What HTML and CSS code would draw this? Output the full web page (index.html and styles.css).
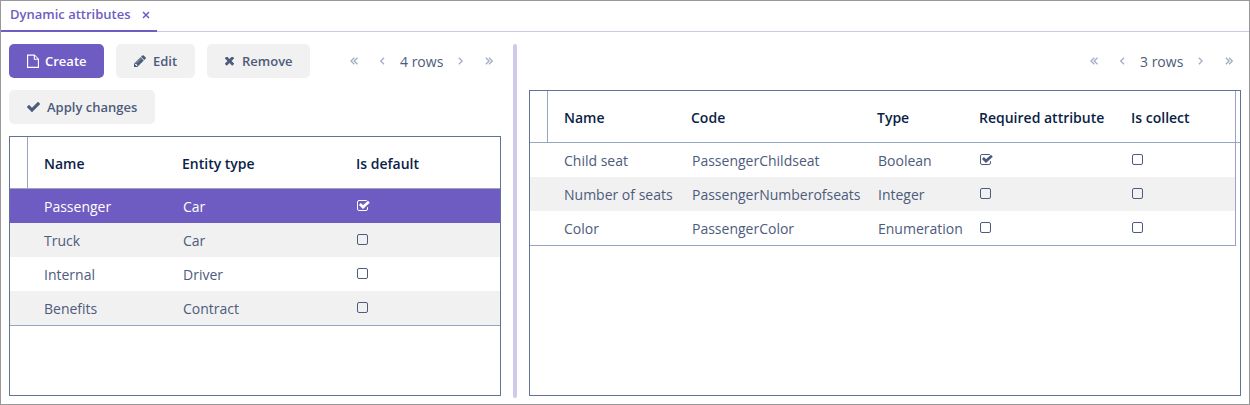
FILE: index.html
```html
<!DOCTYPE html>
<html lang="en">
<head>
<meta charset="utf-8">
<title>Dynamic attributes</title>
<link rel="stylesheet" href="styles.css">
</head>
<body>
<svg class="defs" aria-hidden="true">
  <symbol id="file" viewBox="0 0 12 14"><path fill="currentColor" d="M0 .5h7.6L12 4.900V14H0zM1.150 1.650v11.200h9.700V5.800H6.800v-4.150zM7.900 1.900v2.800h2.700z"/></symbol>
  <symbol id="pencil" viewBox="128 128 1536 1536"><path fill="currentColor" d="M491 1536l91-91-235-235-91 91v107h128v128h107zm523-928q0-22-22-22-10 0-17 7l-542 542q-7 7-7 17 0 22 22 22 10 0 17-7l542-542q7-7 7-17zm-54-192l416 416-832 832h-416v-416zm683 96q0 53-37 90l-166 166-416-416 166-165q36-38 90-38 53 0 91 38l235 234q37 39 37 91z"/></symbol>
  <symbol id="times" viewBox="302 434 1188 1188"><path fill="currentColor" d="M1490 1322q0 40-28 68l-136 136q-28 28-68 28t-68-28l-294-294-294 294q-28 28-68 28t-68-28l-136-136q-28-28-28-68t28-68l294-294-294-294q-28-28-28-68t28-68l136-136q28-28 68-28t68 28l294 294 294-294q28-28 68-28t68 28l136 136q28 28 28 68t-28 68l-294 294 294 294q28 28 28 68z"/></symbol>
  <symbol id="check" viewBox="121 334 1550 1188"><path fill="currentColor" d="M1671 566q0 40-28 68l-724 724-136 136q-28 28-68 28t-68-28l-136-136-362-362q-28-28-28-68t28-68l136-136q28-28 68-28t68 28l294 295 656-657q28-28 68-28t68 28l136 136q28 28 28 68z"/></symbol>
  <symbol id="box" viewBox="0 0 13 11"><rect x=".5" y=".5" width="10" height="10" rx="1.500" fill="none" stroke="currentColor"/></symbol>
  <symbol id="box-on" viewBox="0 0 13 11"><path d="M10.500 7.200V9q0 1.500-1.500 1.500H2Q.5 10.500.5 9V2Q.5.5 2 .5h7q.6 0 1 .3" fill="none" stroke="currentColor"/><path d="M2.900 4.100l3.100 2.900 5.900-5.200" fill="none" stroke="currentColor" stroke-width="2.800"/></symbol>
  <symbol id="prev" viewBox="0 0 8 8"><path d="M6 .7L2.700 4 6 7.300" fill="none" stroke="currentColor" stroke-width="1.300"/></symbol>
  <symbol id="first" viewBox="0 0 8 8"><path d="M4.300.7L1 4l3.300 3.300M7.500.7L4.200 4l3.300 3.300" fill="none" stroke="currentColor" stroke-width="1.300"/></symbol>
  <symbol id="next" viewBox="0 0 8 8"><path d="M1.800.7L5.100 4 1.800 7.300" fill="none" stroke="currentColor" stroke-width="1.300"/></symbol>
  <symbol id="last" viewBox="0 0 8 8"><path d="M.8.7L4.100 4 .8 7.300M4 .7L7.300 4 4 7.300" fill="none" stroke="currentColor" stroke-width="1.300"/></symbol>
</svg>
<div class="window">
  <header class="tabs">
    <div class="tab"><span>Dynamic attributes</span><svg class="close" viewBox="0 0 8 8"><path d="M1 1l6 6M7 1L1 7" stroke="currentColor" stroke-width="1.500"/></svg></div>
  </header>
  <main class="split">
    <section class="pane pane-left">
      <div class="toolbar">
        <button class="btn primary create"><svg class="i-file"><use href="#file"/></svg>Create</button>
        <button class="btn edit"><svg class="i-pencil"><use href="#pencil"/></svg>Edit</button>
        <button class="btn remove"><svg class="i-times"><use href="#times"/></svg>Remove</button>
        <nav class="pager"><svg><use href="#first"/></svg><svg><use href="#prev"/></svg><span>4 rows</span><svg><use href="#next"/></svg><svg><use href="#last"/></svg></nav>
        <button class="btn apply"><svg class="i-check"><use href="#check"/></svg>Apply changes</button>
      </div>
      <div class="table entities">
        <div class="row head"><i class="stub"></i><b>Name</b><b>Entity type</b><b>Is default</b></div>
        <div class="body">
          <div class="row selected"><i></i><span>Passenger</span><span>Car</span><svg><use href="#box-on"/></svg></div>
          <div class="row alt"><i></i><span>Truck</span><span>Car</span><svg><use href="#box"/></svg></div>
          <div class="row"><i></i><span>Internal</span><span>Driver</span><svg><use href="#box"/></svg></div>
          <div class="row alt"><i></i><span>Benefits</span><span>Contract</span><svg><use href="#box"/></svg></div>
        </div>
      </div>
    </section>
    <div class="splitter"></div>
    <section class="pane pane-right">
      <div class="toolbar">
        <nav class="pager"><svg><use href="#first"/></svg><svg><use href="#prev"/></svg><span>3 rows</span><svg><use href="#next"/></svg><svg><use href="#last"/></svg></nav>
      </div>
      <div class="table attributes">
        <div class="row head"><i class="stub"></i><b>Name</b><b>Code</b><b>Type</b><b>Required attribute</b><b>Is collect</b><i class="edge"></i></div>
        <div class="body">
          <div class="row"><i></i><span>Child seat</span><span>PassengerChildseat</span><span>Boolean</span><svg><use href="#box-on"/></svg><svg><use href="#box"/></svg></div>
          <div class="row alt"><i></i><span>Number of seats</span><span>PassengerNumberofseats</span><span>Integer</span><svg><use href="#box"/></svg><svg><use href="#box"/></svg></div>
          <div class="row"><i></i><span>Color</span><span>PassengerColor</span><span>Enumeration</span><svg><use href="#box"/></svg><svg><use href="#box"/></svg></div>
        </div>
      </div>
    </section>
  </main>
</div>
</body>
</html>
```
FILE: styles.css
```css
* { box-sizing: border-box; }
body { margin: 0; background: #fff; font-family: "Open Sans", sans-serif; font-size: 14px; color: #4d5b7c; }
svg { display: block; flex: none; }
.defs { display: none; }
.window { height: 405px; border: 1px solid #999; display: flex; flex-direction: column; overflow: hidden; }
.tabs { height: 31px; display: flex; box-shadow: inset 0 -1px #cdc6e9; }
.tab { width: 156px; height: 31px; padding: 0 7px 4px 9px; display: flex; align-items: center; justify-content: space-between; border-bottom: 2px solid #6f5cc2; color: #6f5cc2; font-size: 13px; font-weight: 600; line-height: 24px; white-space: nowrap; }
.close { width: 8px; height: 8px; margin-top: 3px; }
.split { flex: 1; display: flex; padding: 12px 8px 6px; gap: 12px; }
.pane { display: flex; flex-direction: column; gap: 12px; padding-bottom: 2px; }
.pane-left { width: 492px; }
.pane-right { width: 712px; }
.splitter { width: 4px; border-radius: 2px; background: #d0c9eb; }
.toolbar { display: flex; flex-wrap: wrap; gap: 12px; }
.btn { height: 34px; border: 0; border-radius: 5px; padding: 0; display: flex; align-items: center; background: #f1f1f1; color: #4d5b7c; font: 600 13px/34px "Open Sans", sans-serif; white-space: nowrap; }
.btn.primary { background: #6f5cc2; color: #fff; }
.create { width: 95px; padding-left: 18px; gap: 6px; }
.edit { width: 79px; padding-left: 18px; gap: 7px; }
.remove { width: 103px; padding-left: 18px; gap: 8px; }
.apply { width: 146px; padding-left: 18px; gap: 7px; }
.i-file { width: 12px; height: 14px; }
.i-pencil { width: 12px; height: 12px; }
.i-times { width: 9px; height: 9px; }
.i-check { width: 13px; height: 10px; }
.pager { height: 34px; margin-left: auto; padding-right: 8px; display: flex; align-items: center; color: #a3adc5; }
.pager svg { width: 8px; height: 8px; }
.pager svg + svg { margin-left: 20px; }
.pager span { width: 43px; margin: 2px 14px 0; color: #4d5b7c; line-height: 20px; white-space: nowrap; }
.table { flex: 1; border: 1px solid #637396; }
.row { display: grid; height: 34px; align-items: center; white-space: nowrap; }
.entities .row { grid-template-columns: 34px 139px 174px 1fr; }
.attributes .row { grid-template-columns: 34px 128px 186px 102px 152px 1fr; }
.row span, .row b { line-height: 20px; }
.row span { padding-top: 1px; }
.row svg { width: 13px; height: 11px; margin-top: -2px; }
.row.head { height: 52px; border-bottom: 1px solid #98a5c0; color: #0b1f47; }
.head b { font-weight: 600; padding-top: 2px; }
.entities .head b + b, .attributes .head b + b { margin-left: -1px; }
.attributes .row.head { grid-template-columns: 34px 128px 186px 102px 152px 1fr 5px; }
.stub { width: 18px; height: 100%; border-right: 1px solid #98a5c0; }
.edge { height: 100%; border-left: 1px solid #98a5c0; }
.body { border-bottom: 1px solid #98a5c0; }
.attributes .body { border-right: 1px solid #98a5c0; margin-right: 4px; }
.alt { background: #f1f1f1; }
.selected { background: #6f5cc2; color: #fff; }
```
